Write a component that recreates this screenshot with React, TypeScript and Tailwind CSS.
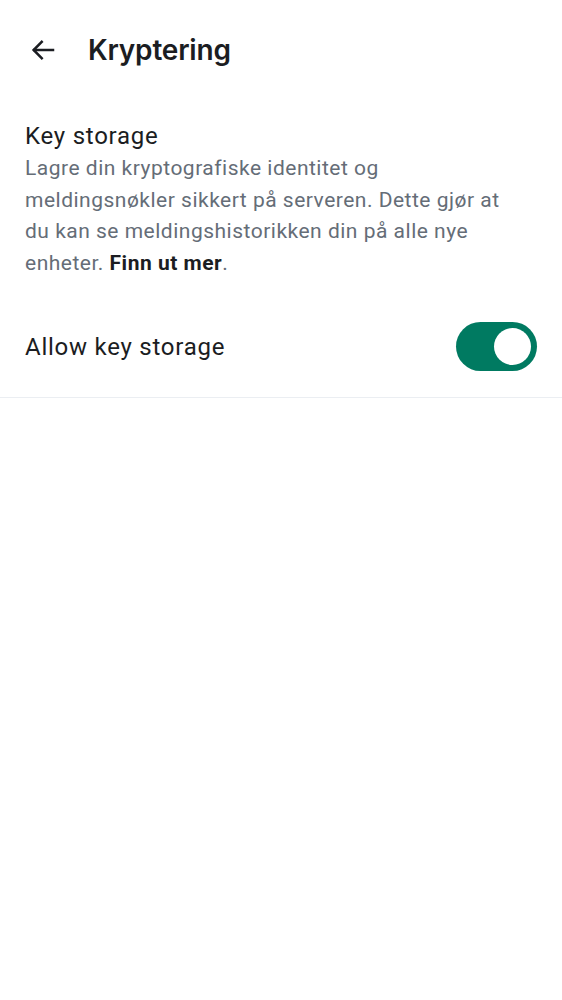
export default function App() {
  return (
    <div className="w-[562px] h-[1000px] bg-white" style={{ fontFamily: 'Roboto, "Noto Sans", sans-serif' }}>
      <div className="flex items-center h-[100px] pl-[28px]">
        <svg width="30" height="30" viewBox="0 0 24 24" fill="none" stroke="#1b1d22" strokeWidth="2" strokeLinecap="square">
          <path d="M20 12H5" />
          <path d="M11 5.5 4.5 12l6.5 6.5" />
        </svg>
        <h1 className="ml-[30px] text-[28px] font-semibold text-[#1b1d22] tracking-[-0.2px]" style={{ fontFamily: 'Inter, sans-serif' }}>
          Kryptering
        </h1>
      </div>
      <div className="px-[25px] pt-[20px]">
        <div className="text-[24px] leading-[32px] tracking-[0.75px] text-[#1b1d22]">Key storage</div>
        <p className="mt-[1px] text-[21px] leading-[31.5px] tracking-[0.5px] text-[#656d77] pr-[20px]">
          Lagre din kryptografiske identitet og meldingsnøkler sikkert på serveren. Dette gjør at du kan se meldingshistorikken din på alle nye enheter.{' '}
          <span className="font-bold text-[#1b1d22]">Finn ut mer</span>.
        </p>
      </div>
      <div className="mt-[17px] flex items-center justify-between px-[25px] h-[102px] border-b border-[#ebeef2]">
        <span className="text-[24px] tracking-[0.75px] text-[#1b1d22]">Allow key storage</span>
        <div className="w-[81px] h-[49px] rounded-full bg-[#007a61] flex items-center justify-end pr-[6px]">
          <div className="w-[37px] h-[37px] rounded-full bg-white" />
        </div>
      </div>
    </div>
  );
}
